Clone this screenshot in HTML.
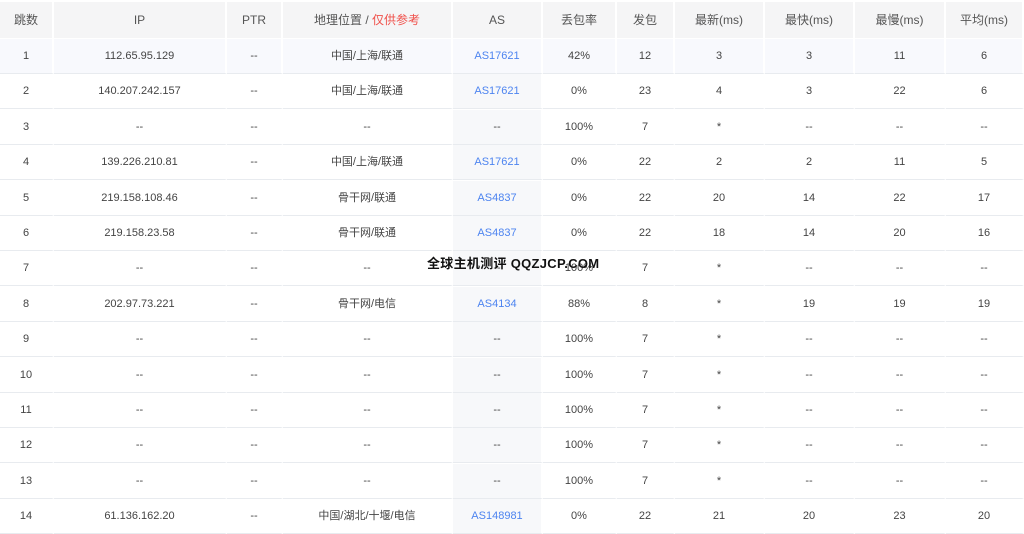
<!DOCTYPE html>
<html><head><meta charset="utf-8"><style>
body{margin:0;width:1024px;height:530px;overflow:hidden;background:#fff;font-family:"Liberation Sans","Noto Sans CJK SC",sans-serif;font-size:11px;color:#444;position:relative}
.r{position:absolute;left:0;width:1024px;height:35px;display:flex}
.r div{box-sizing:border-box;border-right:2px solid #fff;display:flex;align-items:center;justify-content:center;height:100%;border-bottom:1px solid #e8ebef;line-height:12px}
.r div:nth-child(1){width:54px}.r div:nth-child(2){width:173px}.r div:nth-child(3){width:56px}.r div:nth-child(4){width:170px}
.r div:nth-child(5){width:90px;background:#f7f8fa;color:#4d84f0}.r div:nth-child(6){width:74px}.r div:nth-child(7){width:58px}
.r div:nth-child(8){width:90px}.r div:nth-child(9){width:90px}.r div:nth-child(10){width:91px}.r div:nth-child(11){width:78px}
.r.h{height:36px}
.r.h div{background:#f5f5f6;color:#555;font-size:12px;border-bottom:none}
.r.hl div{background:#f8f9fd}
.red{color:#f0504a}
.wm{position:absolute;left:427px;top:253px;font-weight:bold;font-size:13px;color:#111;letter-spacing:0.3px}
</style></head><body>
<div class="r h" style="top:2px"><div>跳数</div><div>IP</div><div>PTR</div><div>地理位置 /&nbsp;<span class="red">仅供参考</span></div><div>AS</div><div>丢包率</div><div>发包</div><div>最新(ms)</div><div>最快(ms)</div><div>最慢(ms)</div><div>平均(ms)</div></div>
<div class="r hl" style="top:39px"><div>1</div><div>112.65.95.129</div><div>--</div><div>中国/上海/联通</div><div>AS17621</div><div>42%</div><div>12</div><div>3</div><div>3</div><div>11</div><div>6</div></div>
<div class="r" style="top:74.4px"><div>2</div><div>140.207.242.157</div><div>--</div><div>中国/上海/联通</div><div>AS17621</div><div>0%</div><div>23</div><div>4</div><div>3</div><div>22</div><div>6</div></div>
<div class="r" style="top:109.8px"><div>3</div><div>--</div><div>--</div><div>--</div><div style="color:#444">--</div><div>100%</div><div>7</div><div>*</div><div>--</div><div>--</div><div>--</div></div>
<div class="r" style="top:145.2px"><div>4</div><div>139.226.210.81</div><div>--</div><div>中国/上海/联通</div><div>AS17621</div><div>0%</div><div>22</div><div>2</div><div>2</div><div>11</div><div>5</div></div>
<div class="r" style="top:180.6px"><div>5</div><div>219.158.108.46</div><div>--</div><div>骨干网/联通</div><div>AS4837</div><div>0%</div><div>22</div><div>20</div><div>14</div><div>22</div><div>17</div></div>
<div class="r" style="top:216px"><div>6</div><div>219.158.23.58</div><div>--</div><div>骨干网/联通</div><div>AS4837</div><div>0%</div><div>22</div><div>18</div><div>14</div><div>20</div><div>16</div></div>
<div class="r" style="top:251.4px"><div>7</div><div>--</div><div>--</div><div>--</div><div style="color:#444">--</div><div>100%</div><div>7</div><div>*</div><div>--</div><div>--</div><div>--</div></div>
<div class="r" style="top:286.8px"><div>8</div><div>202.97.73.221</div><div>--</div><div>骨干网/电信</div><div>AS4134</div><div>88%</div><div>8</div><div>*</div><div>19</div><div>19</div><div>19</div></div>
<div class="r" style="top:322.2px"><div>9</div><div>--</div><div>--</div><div>--</div><div style="color:#444">--</div><div>100%</div><div>7</div><div>*</div><div>--</div><div>--</div><div>--</div></div>
<div class="r" style="top:357.6px"><div>10</div><div>--</div><div>--</div><div>--</div><div style="color:#444">--</div><div>100%</div><div>7</div><div>*</div><div>--</div><div>--</div><div>--</div></div>
<div class="r" style="top:393px"><div>11</div><div>--</div><div>--</div><div>--</div><div style="color:#444">--</div><div>100%</div><div>7</div><div>*</div><div>--</div><div>--</div><div>--</div></div>
<div class="r" style="top:428.4px"><div>12</div><div>--</div><div>--</div><div>--</div><div style="color:#444">--</div><div>100%</div><div>7</div><div>*</div><div>--</div><div>--</div><div>--</div></div>
<div class="r" style="top:463.8px"><div>13</div><div>--</div><div>--</div><div>--</div><div style="color:#444">--</div><div>100%</div><div>7</div><div>*</div><div>--</div><div>--</div><div>--</div></div>
<div class="r" style="top:499.2px"><div>14</div><div>61.136.162.20</div><div>--</div><div>中国/湖北/十堰/电信</div><div>AS148981</div><div>0%</div><div>22</div><div>21</div><div>20</div><div>23</div><div>20</div></div>
<div class="wm">全球主机测评 QQZJCP.COM</div>
</body></html>
